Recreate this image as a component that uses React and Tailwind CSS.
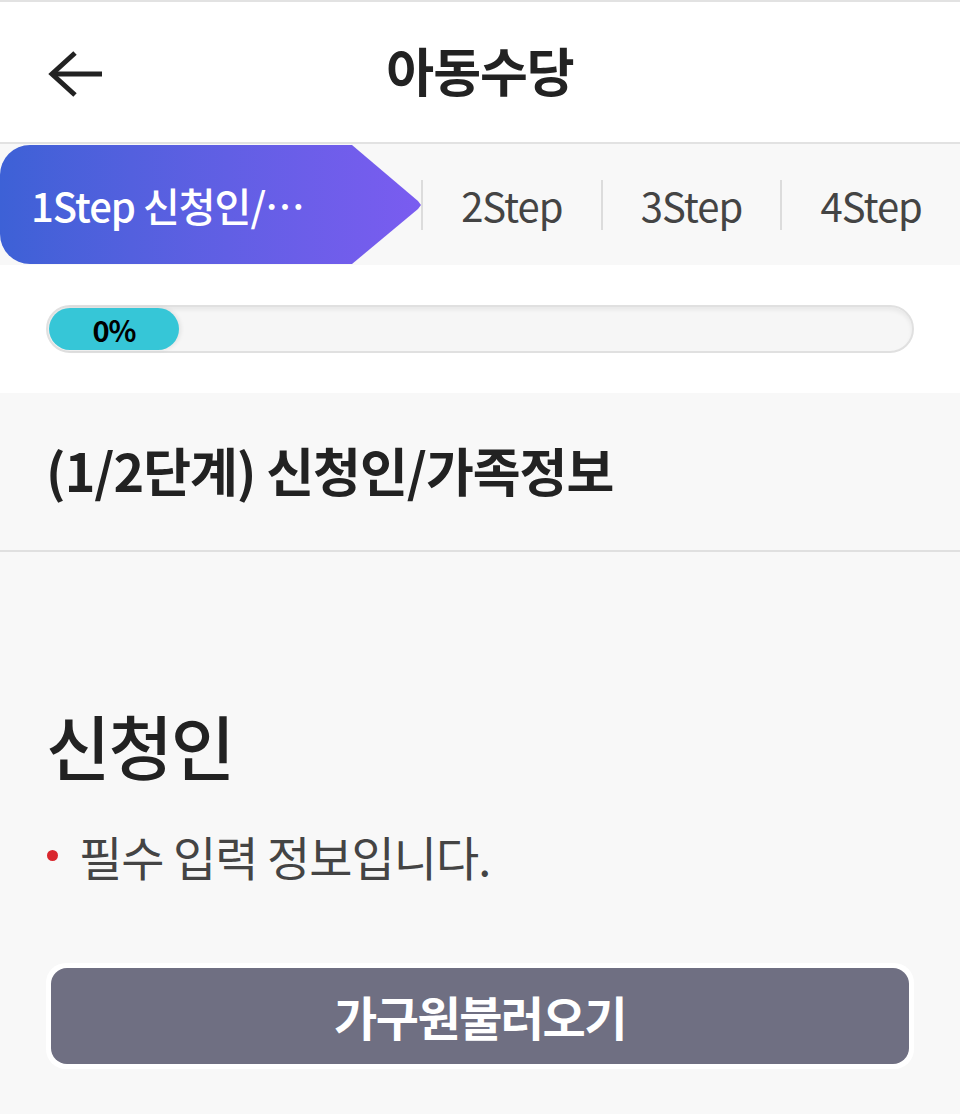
import React from "react";

export default function App() {
  const font = { fontFamily: '"Noto Sans CJK KR", "Noto Sans", sans-serif' };
  return (
    <div className="w-[960px] min-h-[1114px] bg-[#f8f8f8]" style={font}>
      {/* Header */}
      <div className="relative h-[144px] bg-white border-t-2 border-b-2 border-[#e2e2e2] flex items-center justify-center">
        <button className="absolute left-[48px] top-[48px] w-[56px] h-[48px] flex items-center">
          <svg width="56" height="46" viewBox="0 0 56 46" fill="none">
            <path d="M54 23 H5" stroke="#222" strokeWidth="5" strokeLinecap="butt" />
            <path d="M27 2 L4 23 L27 44" stroke="#222" strokeWidth="5" strokeLinejoin="miter" strokeLinecap="butt" />
          </svg>
        </button>
        <h1 className="text-[52px] font-bold text-[#222] leading-none tracking-[-1px] pb-[4px]">아동수당</h1>
      </div>

      {/* Steps */}
      <div className="h-[121px] bg-[#f8f8f8] flex items-center">
        <div
          className="w-[421px] h-[119px] rounded-l-[30px] bg-gradient-to-r from-[#3d61d6] to-[#7a5cf0] flex items-center pl-[31px]"
          style={{ clipPath: "polygon(0 0, 352px 0, 418px 56px, 421px 60px, 418px 64px, 352px 119px, 0 119px)" }}
        >
          <span className="text-white text-[40px] font-medium leading-none tracking-[-1px]">1Step 신청인/…</span>
        </div>
        <div className="flex-1 flex items-center">
          {["2Step", "3Step", "4Step"].map((s) => (
            <div key={s} className="flex-1 h-[50px] border-l-2 border-[#dcdcdc] flex items-center justify-center">
              <span className="text-[40px] text-[#444] leading-none tracking-[-1px]">{s}</span>
            </div>
          ))}
        </div>
      </div>

      {/* Progress */}
      <div className="h-[128px] bg-white flex items-center px-[46px]">
        <div className="w-full h-[48px] rounded-full border-2 border-[#e0e0e0] bg-[#f6f6f6] shadow-[inset_0_3px_4px_rgba(0,0,0,0.06)] flex items-center p-[1px]">
          <div className="w-[130px] h-full rounded-full bg-[#36c6d7] flex items-center justify-center shadow-[2px_0_4px_rgba(0,0,0,0.08)]">
            <span className="text-[29px] font-bold text-black leading-none tracking-[-1px]">0%</span>
          </div>
        </div>
      </div>

      {/* Section title */}
      <div className="h-[159px] border-b-2 border-[#e0e0e0] flex items-center px-[46px]">
        <h2 className="text-[52px] font-bold text-[#222] leading-none tracking-[-1px] pb-[4px]">(1/2단계) 신청인/가족정보</h2>
      </div>

      {/* Content */}
      <div className="px-[46px] pt-[158px]">
        <h3 className="text-[70px] font-medium text-[#222] leading-none tracking-[-2px]">신청인</h3>
        <div className="mt-[52px] flex items-center">
          <span className="ml-[1px] w-[11px] h-[11px] rounded-full bg-[#d9272e]" />
          <span className="ml-[21px] text-[47px] text-[#444] leading-none tracking-[-1px]">필수 입력 정보입니다.</span>
        </div>
        <div className="mt-[84px] bg-white rounded-[20px] p-[5px]">
          <button className="w-full h-[96px] rounded-[16px] bg-[#6f6f82] flex items-center justify-center">
            <span className="text-[47px] font-bold text-white leading-none tracking-[-1.5px] pb-[2px]">가구원불러오기</span>
          </button>
        </div>
      </div>
    </div>
  );
}
